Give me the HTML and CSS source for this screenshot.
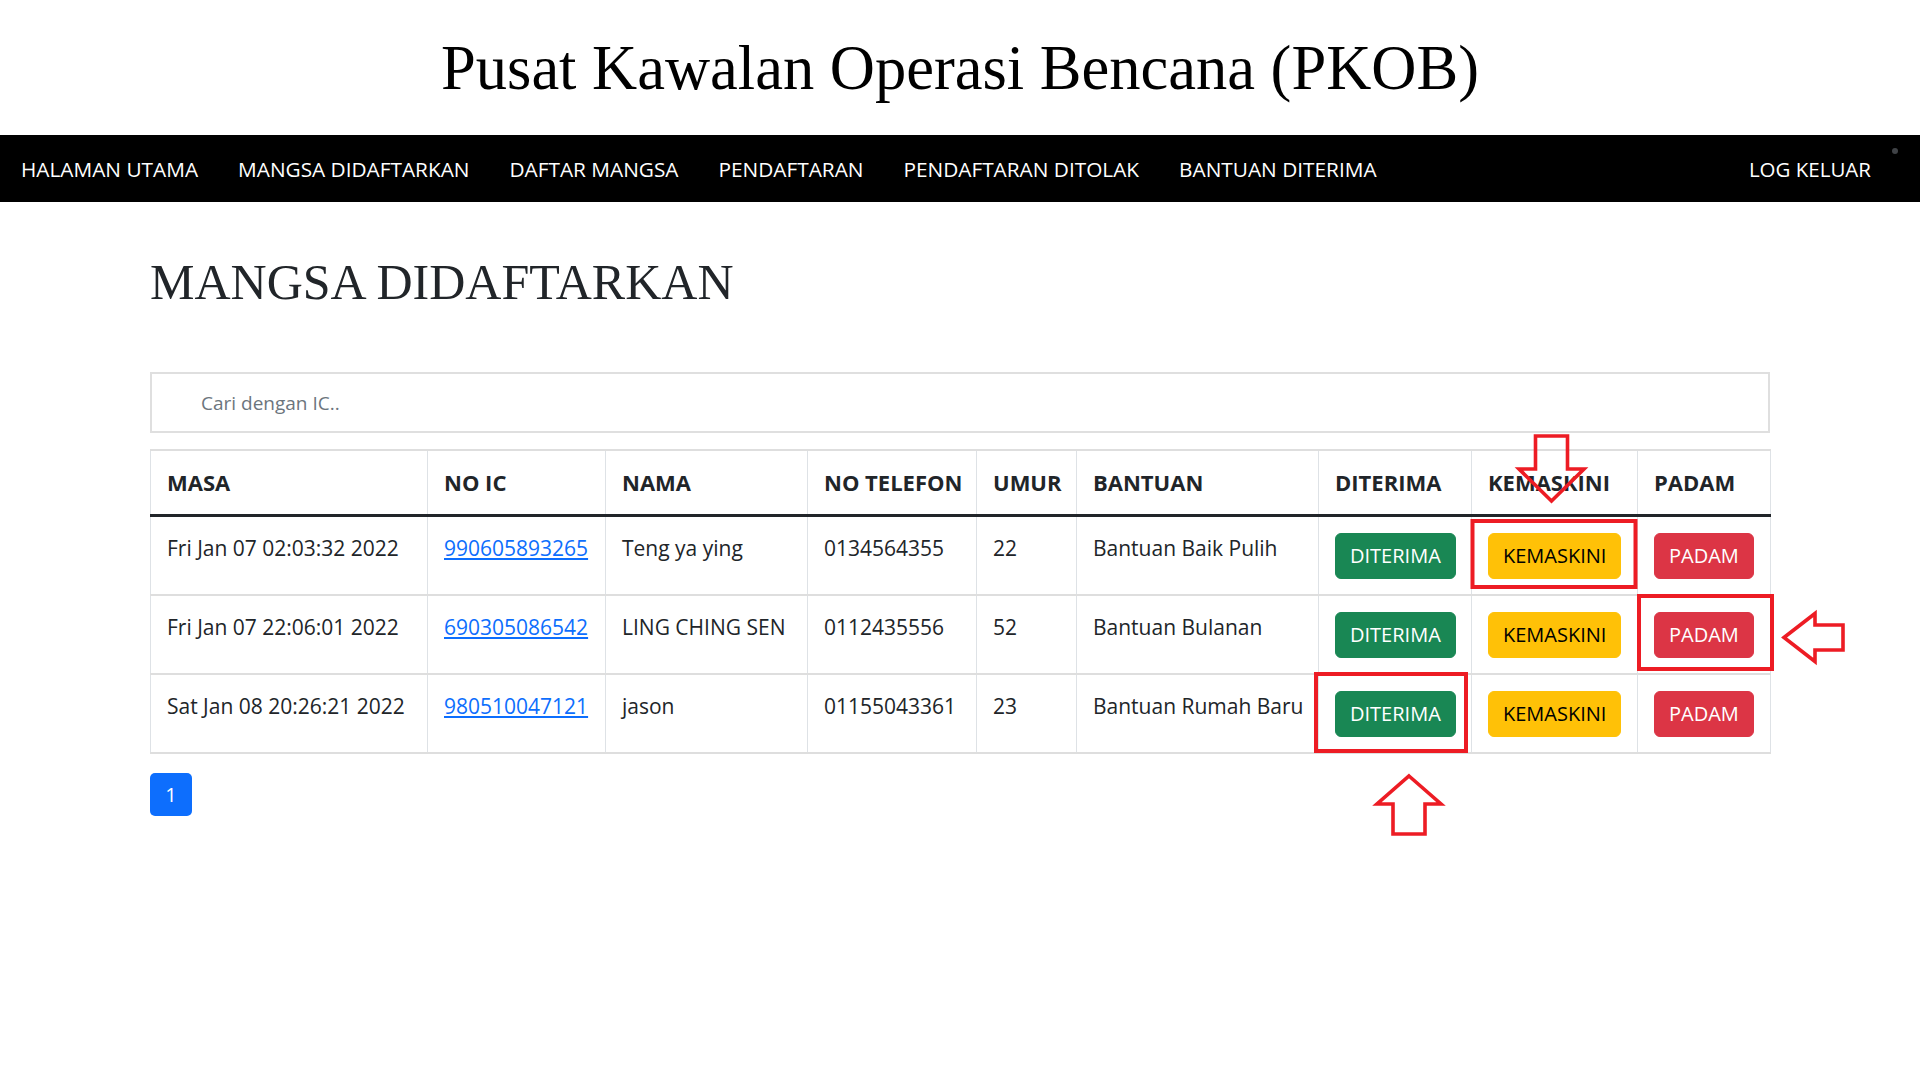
FILE: index.html
```html
<!DOCTYPE html>
<html lang="ms">
<head>
<meta charset="utf-8">
<title>Pusat Kawalan Operasi Bencana (PKOB)</title>
<link rel="stylesheet" href="styles.css">
</head>
<body>
<header class="site-header">
  <h1 class="site-title">Pusat Kawalan Operasi Bencana (PKOB)</h1>
</header>
<nav class="topnav">
  <ul class="nav-list">
    <li><a class="nav-link" href="#">HALAMAN UTAMA</a></li>
    <li><a class="nav-link" href="#">MANGSA DIDAFTARKAN</a></li>
    <li><a class="nav-link" href="#">DAFTAR MANGSA</a></li>
    <li><a class="nav-link" href="#">PENDAFTARAN</a></li>
    <li><a class="nav-link" href="#">PENDAFTARAN DITOLAK</a></li>
    <li><a class="nav-link" href="#">BANTUAN DITERIMA</a></li>
  </ul>
  <a class="nav-link nav-logout" href="#">LOG KELUAR</a>
  <span class="nav-dot"></span>
</nav>
<main class="content">
  <h2 class="page-title">MANGSA DIDAFTARKAN</h2>
  <input class="search" type="text" placeholder="Cari dengan IC..">
  <table class="data-table">
    <colgroup>
      <col class="c-masa"><col class="c-ic"><col class="c-nama"><col class="c-tel"><col class="c-umur"><col class="c-bantuan"><col class="c-diterima"><col class="c-kemaskini"><col class="c-padam">
    </colgroup>
    <thead>
      <tr><th>MASA</th><th>NO IC</th><th>NAMA</th><th>NO TELEFON</th><th>UMUR</th><th>BANTUAN</th><th>DITERIMA</th><th>KEMASKINI</th><th>PADAM</th></tr>
    </thead>
    <tbody>
      <tr>
        <td>Fri Jan 07 02:03:32 2022</td>
        <td><a class="ic-link" href="#">990605893265</a></td>
        <td>Teng ya ying</td>
        <td>0134564355</td>
        <td>22</td>
        <td>Bantuan Baik Pulih</td>
        <td><a class="btn btn-green" href="#">DITERIMA</a></td>
        <td><a class="btn btn-yellow" href="#">KEMASKINI</a></td>
        <td><a class="btn btn-red" href="#">PADAM</a></td>
      </tr>
      <tr>
        <td>Fri Jan 07 22:06:01 2022</td>
        <td><a class="ic-link" href="#">690305086542</a></td>
        <td>LING CHING SEN</td>
        <td>0112435556</td>
        <td>52</td>
        <td>Bantuan Bulanan</td>
        <td><a class="btn btn-green" href="#">DITERIMA</a></td>
        <td><a class="btn btn-yellow" href="#">KEMASKINI</a></td>
        <td><a class="btn btn-red" href="#">PADAM</a></td>
      </tr>
      <tr>
        <td>Sat Jan 08 20:26:21 2022</td>
        <td><a class="ic-link" href="#">980510047121</a></td>
        <td>jason</td>
        <td>01155043361</td>
        <td>23</td>
        <td>Bantuan Rumah Baru</td>
        <td><a class="btn btn-green" href="#">DITERIMA</a></td>
        <td><a class="btn btn-yellow" href="#">KEMASKINI</a></td>
        <td><a class="btn btn-red" href="#">PADAM</a></td>
      </tr>
    </tbody>
  </table>
  <div class="pagination"><a class="page-link" href="#">1</a></div>
</main>
<svg class="annotations" width="1920" height="1080" viewBox="0 0 1920 1080" aria-hidden="true">
  <g fill="none" stroke="#ed1c24" stroke-width="4">
    <rect x="1472.5" y="521" width="163" height="66"/>
    <rect x="1639" y="596" width="133" height="73"/>
    <rect x="1316" y="674" width="150" height="77"/>
  </g>
  <g fill="none" stroke="#ed1c24" stroke-width="3.6" stroke-linejoin="miter">
    <polygon points="1535.5,436 1567.5,436 1567.5,469 1584,469 1551.5,501 1519,469 1535.5,469"/>
    <polygon points="1409,776 1441,804 1425,804 1425,834 1393,834 1393,804 1377,804"/>
    <polygon points="1784,637.5 1815,613.5 1815,625 1843,625 1843,650 1815,650 1815,661.5"/>
  </g>
</svg>
</body>
</html>
```
FILE: styles.css
```css
* { box-sizing: border-box; }

html, body {
  min-height: 1080px;
}

body {
  margin: 0;
  position: relative;
  font-family: "Open Sans", "Noto Sans", sans-serif;
  font-size: 21px;
  line-height: 30px;
  color: #212529;
  background: #fff;
}

.site-header {
  padding: 31px 0 30px;
  text-align: center;
}

.site-title {
  margin: 0;
  font-family: "Liberation Serif", "Times New Roman", serif;
  font-weight: normal;
  font-size: 62.5px;
  line-height: 74px;
  color: #000;
}

.topnav {
  position: relative;
  height: 67px;
  background: #000;
  display: flex;
  align-items: center;
  justify-content: space-between;
  padding: 0 29px 0 1px;
}

.nav-list {
  display: flex;
  margin: 0;
  padding: 0;
  list-style: none;
}

.nav-link {
  display: block;
  padding: 0 20px;
  color: #fff;
  text-decoration: none;
  font-size: 20.8px;
  line-height: 30px;
}

.nav-logout {
  font-size: 20.5px;
}

.nav-dot {
  position: absolute;
  left: 1892px;
  top: 13px;
  width: 6px;
  height: 6px;
  border-radius: 50%;
  background: #3f4246;
}

.content {
  margin: 0 150px;
}

.page-title {
  margin: 50px 0 60px;
  font-family: "Liberation Serif", "Times New Roman", serif;
  font-weight: normal;
  font-size: 50px;
  line-height: 60px;
  color: #212529;
}

.search {
  display: block;
  width: 100%;
  height: 61px;
  margin: 0;
  padding: 0 49px;
  border: 2px solid #dfdfdf;
  border-radius: 0;
  font-family: "Open Sans", "Noto Sans", sans-serif;
  font-size: 19px;
  color: #212529;
  outline: none;
}

.search::placeholder {
  color: #6c757d;
}

.data-table {
  width: 1620px;
  margin-top: 16px;
  border-collapse: collapse;
  table-layout: fixed;
  border-top: 2px solid #dedede;
}

.c-masa { width: 277px; }
.c-ic { width: 178px; }
.c-nama { width: 202px; }
.c-tel { width: 169px; }
.c-umur { width: 100px; }
.c-bantuan { width: 242px; }
.c-diterima { width: 153px; }
.c-kemaskini { width: 166px; }
.c-padam { width: 133px; }

.data-table th,
.data-table td {
  border-left: 1px solid #dee2e6;
  border-right: 1px solid #dee2e6;
  text-align: left;
  vertical-align: top;
  white-space: nowrap;
}

.data-table th {
  padding: 16px 16px 17px;
  font-size: 22px;
  font-weight: 700;
  border-bottom: 3px solid #212529;
}

.data-table td {
  padding: 16px 16px 15px;
  border-bottom: 2px solid #dedede;
}

.ic-link {
  color: #0d6efd;
  text-decoration: underline;
}

.btn {
  display: inline-block;
  vertical-align: top;
  height: 46px;
  padding: 7px 14px;
  border: 1px solid transparent;
  border-radius: 6px;
  font-size: 20px;
  line-height: 30px;
  text-decoration: none;
}

.btn-green { background: #198754; border-color: #198754; color: #fff; }
.btn-yellow { background: #ffc107; border-color: #ffc107; color: #000; }
.btn-red { background: #dc3545; border-color: #dc3545; color: #fff; }

.pagination {
  display: flex;
  margin-top: 19px;
}

.page-link {
  display: flex;
  align-items: center;
  justify-content: center;
  width: 42px;
  height: 43px;
  border-radius: 5px;
  background: #0d6efd;
  color: #fff;
  text-decoration: none;
  font-size: 20px;
}

.annotations {
  position: absolute;
  top: 0;
  left: 0;
  overflow: visible;
  pointer-events: none;
}
```
